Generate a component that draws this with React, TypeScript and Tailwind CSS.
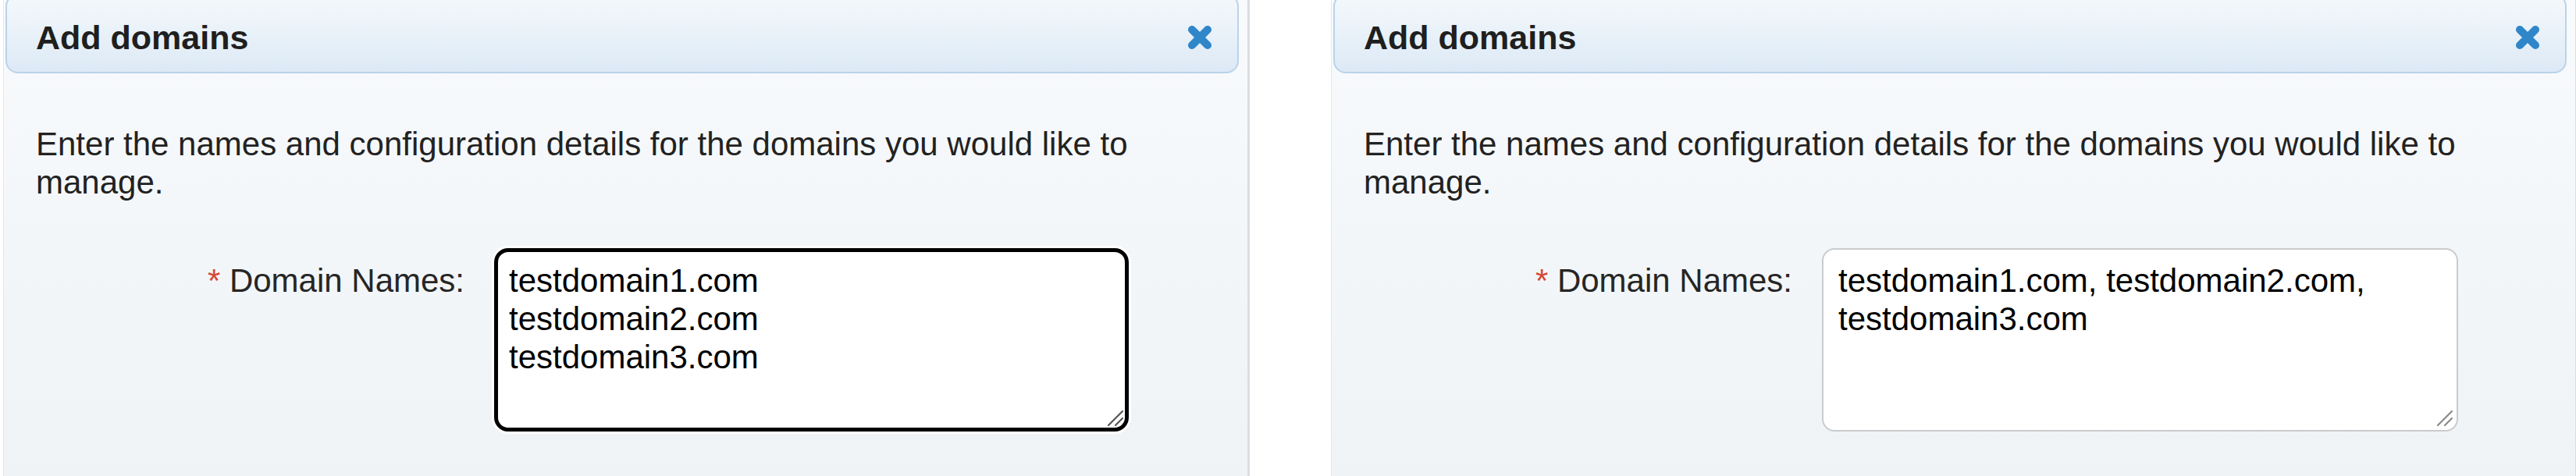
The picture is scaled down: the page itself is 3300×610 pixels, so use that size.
import React from "react";

const font = "font-['Liberation_Sans',Arial,sans-serif]";

function CloseIcon() {
  return (
    <svg width="36" height="34" viewBox="0 0 36 34" aria-hidden="true">
      <path d="M8 7 L28 27 M28 7 L8 27" stroke="#2f86c9" strokeWidth="10" strokeLinecap="round" fill="none" />
    </svg>
  );
}

function ResizeHandle({ color }: { color: string }) {
  return (
    <svg width="24" height="24" viewBox="0 0 24 24" className="absolute right-[6px] bottom-[6px] pointer-events-none">
      <path d="M4 22 L22 4 M13 22 L22 13" stroke={color} strokeWidth="2.2" strokeLinecap="round" />
    </svg>
  );
}

function DomainPanel({ value, focused }: { value: string; focused: boolean }) {
  return (
    <div className="w-[1597px] h-full shrink-0 flex flex-col border-l border-[#e4e8ec] border-r-[3px] border-r-[#dadee2] bg-gradient-to-b from-[#f8fafc] to-[#eff3f6]">
      {/* Header */}
      <div className="-mt-[8px] ml-[2px] mr-[11px] flex items-center justify-between rounded-[16px] border-2 border-[#bad3ea] bg-[linear-gradient(to_bottom,#f4f8fb_0%,#eaf2f9_45%,#dce9f5_100%)] pt-[29px] pb-[19px] pl-[37px] pr-[30px]">
        <h2 className="text-[43px] leading-[50px] font-bold text-[#1f1f1f]">Add domains</h2>
        <button className="flex items-center justify-center">
          <CloseIcon />
        </button>
      </div>

      {/* Body */}
      <p className="mt-[66px] pl-[41px] pr-[40px] text-[42px] leading-[49px] text-[#222]">
        Enter the names and configuration details for the domains you would like to manage.
      </p>

      <div className="mt-[60px] flex items-start gap-[38px]">
        <label className="w-[590px] shrink-0 text-right pt-[17px] text-[42px] leading-[49px] text-[#262626]">
          <span className="text-[#d4493a]">*</span> Domain Names:
        </label>
        <div className="relative">
          <textarea
            readOnly
            value={value}
            className={
              focused
                ? "block w-[813px] h-[235px] resize-none overflow-hidden rounded-[18px] border-[5px] border-black bg-white pl-[14px] pt-[12px] pr-[14px] text-[42px] leading-[49px] text-black outline-none shadow-[0_0_0_3px_#ffffff] " + font
                : "block w-[815px] h-[235px] resize-none overflow-hidden rounded-[16px] border-2 border-[#c9cbcd] bg-white pl-[19px] pt-[15px] pr-[19px] text-[42px] leading-[49px] text-black outline-none " + font
            }
          />
          <ResizeHandle color={focused ? "#555" : "#8a8a8a"} />
        </div>
      </div>
    </div>
  );
}

export default function App() {
  return (
    <div className={`w-[3300px] h-[610px] overflow-hidden bg-white flex gap-[104px] pl-[4px] ${font}`}>
      <DomainPanel value={"testdomain1.com\ntestdomain2.com\ntestdomain3.com"} focused />
      <DomainPanel value={"testdomain1.com, testdomain2.com, testdomain3.com"} focused={false} />
    </div>
  );
}
